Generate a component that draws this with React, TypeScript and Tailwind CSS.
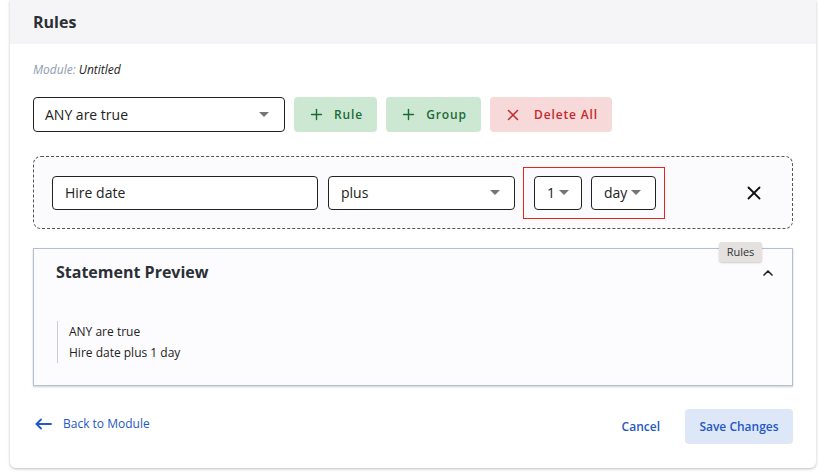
import { Plus, X, ChevronUp } from "lucide-react";

// Petit triangle gris des listes déroulantes
const Caret = () => (
    <span className="inline-block w-0 h-0 border-l-[5px] border-r-[5px] border-t-[5px] border-l-transparent border-r-transparent border-t-[#757575]" />
);

// Flèche de retour, plus longue que celle de lucide
const BackArrow = () => (
    <svg width="17" height="12" viewBox="0 0 17 12" fill="none" stroke="currentColor" strokeWidth="1.8" strokeLinecap="round" strokeLinejoin="round">
        <path d="M16 6H1.5" />
        <path d="M6 1.5L1.5 6L6 10.5" />
    </svg>
);

export default function App() {
    return (
        <div className="w-[824px] h-[476px] bg-white font-['Open_Sans',sans-serif] text-[#222]">
            <div className="relative ml-[10px] w-[806px] h-[468px] bg-white rounded-b-md shadow-[0_1px_3px_rgba(0,0,0,0.25)] flex flex-col">
                {/* En-tête */}
                <div className="h-[44px] bg-[#f5f5f7] px-[23px] flex items-center">
                    <h1 className="text-[16px] font-bold text-[#2b2f36]">Rules</h1>
                </div>

                <div className="px-[23px] flex flex-col">
                    <p className="mt-[18px] text-[12px] leading-4 italic">
                        <span className="text-[#8d9bb0]">Module: </span>
                        <span className="text-[#222]">Untitled</span>
                    </p>

                    {/* Barre d'actions */}
                    <div className="mt-[19px] flex gap-[9px] h-[35px]">
                        <div className="w-[252px] border border-[#222] rounded-[4px] flex items-center justify-between pl-[11px] pr-[15px] text-[14px]">
                            <span>ANY are true</span>
                            <Caret />
                        </div>
                        <button className="w-[83px] bg-[#cde8d2] rounded-[4px] flex items-center justify-center gap-[9px] text-[#1c6a37] text-[12px] font-[550] tracking-[0.07em]">
                            <Plus size={17} strokeWidth={2} />
                            Rule
                        </button>
                        <button className="w-[95px] bg-[#cde8d2] rounded-[4px] flex items-center justify-center gap-[9px] text-[#1c6a37] text-[12px] font-[550] tracking-[0.07em]">
                            <Plus size={17} strokeWidth={2} />
                            Group
                        </button>
                        <button className="w-[122px] bg-[#f6d9d8] rounded-[4px] flex items-center justify-center gap-[12px] text-[#c6282b] text-[12px] font-[550] tracking-[0.07em]">
                            <X size={18} strokeWidth={2} />
                            Delete All
                        </button>
                    </div>

                    {/* Règle */}
                    <div className="mt-[24px] h-[73px] border border-dashed border-[#555] rounded-[8px] bg-[#fbfbfe] flex items-center pl-[18px] pr-[27px]">
                        <div className="w-[266px] h-[34px] border border-[#222] rounded-[4px] bg-white flex items-center pl-[12px] text-[14px]">
                            Hire date
                        </div>
                        <div className="ml-[10px] w-[187px] h-[34px] border border-[#222] rounded-[4px] bg-white flex items-center justify-between pl-[12px] pr-[14px] text-[14px]">
                            <span>plus</span>
                            <Caret />
                        </div>
                        <div className="ml-[8px] w-[142px] h-[52px] border border-[#e8231f] flex items-center pl-[10px] gap-[9px]">
                            <div className="w-[48px] h-[34px] border border-[#222] rounded-[4px] bg-white flex items-center pl-[12px] gap-[4px] text-[14px]">
                                <span>1</span>
                                <Caret />
                            </div>
                            <div className="w-[65px] h-[34px] border border-[#222] rounded-[4px] bg-white flex items-center pl-[12px] gap-[4px] text-[14px]">
                                <span>day</span>
                                <Caret />
                            </div>
                        </div>
                        <X className="ml-auto text-[#111]" size={22} strokeWidth={2} />
                    </div>

                    {/* Aperçu */}
                    <div className="mt-[19px] h-[138px] border border-[#b3bfcd] bg-[#fcfcfe] shadow-[0_1px_2px_rgba(0,0,0,0.2)] pl-[22px] pr-[16px] pt-[11px]">
                        <div className="flex items-center justify-between">
                            <h2 className="text-[16px] font-bold text-[#2b2f36]">Statement Preview</h2>
                            <ChevronUp size={16} strokeWidth={2.5} className="text-[#222] mt-[2px]" />
                        </div>
                        <div className="mt-[37px] ml-[1px] border-l border-[#c8ced8] pl-[11px] text-[12px] leading-[21px] text-[#222]">
                            <p>ANY are true</p>
                            <p>Hire date plus 1 day</p>
                        </div>
                    </div>

                    {/* Pied */}
                    <div className="mt-[23px] flex items-start">
                        <a className="mt-[6px] ml-[2px] flex items-center gap-[11px] text-[#2458c6] text-[12px]">
                            <BackArrow />
                            Back to Module
                        </a>
                        <button className="ml-auto mt-[9px] text-[#2458c6] text-[12px] font-[550]">Cancel</button>
                        <button className="ml-[25px] w-[108px] h-[35px] rounded-[4px] bg-[#dde7f8] text-[#2458c6] text-[12px] font-[550]">
                            Save Changes
                        </button>
                    </div>
                </div>

                {/* Infobulle */}
                <div className="absolute left-[709px] top-[242px] w-[43px] h-[20px] rounded-[3px] bg-[#e4e1df] shadow-[0_1px_2px_rgba(0,0,0,0.2)] flex items-center justify-center text-[11px] text-[#333]">
                    Rules
                </div>
            </div>
        </div>
    );
}
